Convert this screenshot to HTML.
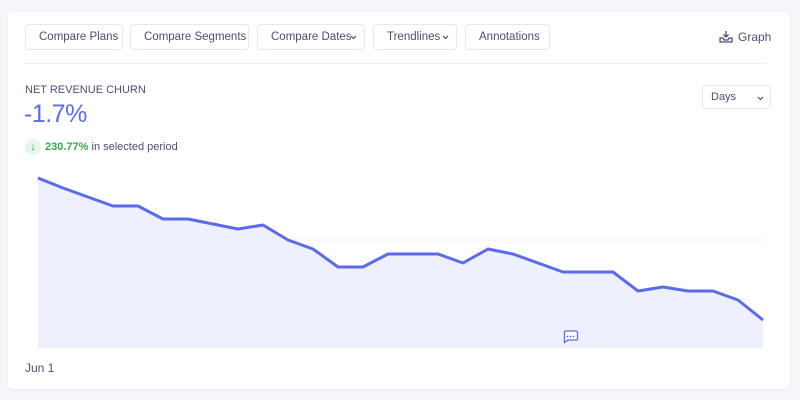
<!DOCTYPE html>
<html><head><style>
body{margin:0;width:800px;height:400px;background:#f5f5fa;font-family:"Liberation Sans",sans-serif;position:relative;overflow:hidden}
.card{position:absolute;left:8px;top:12px;width:782px;height:377px;background:#fff;border-radius:5px;box-shadow:0 1px 2px rgba(0,0,0,.05)}
.btn{position:absolute;top:24px;height:26px;border:1px solid #e6e8f0;border-radius:4px;font-size:11.5px;color:#4b4f73;line-height:24px;box-sizing:border-box;padding-left:13px;background:#fff;white-space:nowrap}
.chev{position:absolute;right:7px;top:10px}
</style></head><body>
<div class="card"></div>
<div class="btn" style="left:25px;width:98px">Compare Plans</div>
<div class="btn" style="left:130px;width:119px">Compare Segments</div>
<div class="btn" style="left:257px;width:108px">Compare Dates<svg class="chev" width="7" height="5"><path d="M1 1l2.5 2.5L6 1" fill="none" stroke="#555" stroke-width="1.2"/></svg></div>
<div class="btn" style="left:373px;width:84px">Trendlines<svg class="chev" width="7" height="5"><path d="M1 1l2.5 2.5L6 1" fill="none" stroke="#555" stroke-width="1.2"/></svg></div>
<div class="btn" style="left:465px;width:85px">Annotations</div>
<svg style="position:absolute;left:719px;top:30px" width="14" height="13" viewBox="0 0 14 13"><path d="M7 1v6M4.5 4.5L7 7l2.5-2.5M1 8v4h12V8H10l-1 2H5L4 8z" fill="none" stroke="#4b4f73" stroke-width="1.3"/></svg>
<div style="position:absolute;left:738px;top:30px;font-size:12px;color:#4b4f73">Graph</div>
<div style="position:absolute;left:24px;top:63px;width:742px;height:1px;background:#eceef4"></div>
<div style="position:absolute;left:25px;top:84px;font-size:11px;color:#4b4f73">NET REVENUE CHURN</div>
<div style="position:absolute;left:24px;top:100px;font-size:25px;color:#5b6bea;letter-spacing:-0.5px">-1.7%</div>
<div style="position:absolute;left:25px;top:139px;width:16px;height:16px;border-radius:50%;background:#e6f6ea;color:#2fae4e;font-size:11px;text-align:center;line-height:16px;font-weight:bold">↓</div>
<div style="position:absolute;left:45px;top:141px;font-size:11px;color:#4b4f73"><span style="color:#2fae4e;font-weight:bold">230.77%</span> in selected period</div>
<div style="position:absolute;left:702px;top:85px;width:69px;height:24px;border:1px solid #e6e8f0;border-radius:4px;box-sizing:border-box;font-size:11px;color:#4b4f73;line-height:22px;padding-left:8px">Days<svg style="position:absolute;right:6px;top:10px" width="7" height="5"><path d="M1 1l2.5 2.5L6 1" fill="none" stroke="#555" stroke-width="1.2"/></svg></div>
<svg style="position:absolute;left:0;top:0" width="800" height="400">
<line x1="38" y1="240" x2="763" y2="240" stroke="#eef0f6"/>
<line x1="38" y1="333" x2="763" y2="333" stroke="#e6e9f6"/>
<polygon fill="#eef1fd" points="38,178 63,188 88,197 113,206 138,206 163,219 188,219 213,224 238,229 263,225 288,240 313,249 338,267 363,267 388,254 413,254 438,254 463,263 488,249 513,254 538,263 563,272 588,272 613,272 638,291 663,287 688,291 713,291 738,300 763,320 763,348 38,348"/>
<polyline fill="none" stroke="#5b6bea" stroke-width="3" stroke-linejoin="round" points="38,178 63,188 88,197 113,206 138,206 163,219 188,219 213,224 238,229 263,225 288,240 313,249 338,267 363,267 388,254 413,254 438,254 463,263 488,249 513,254 538,263 563,272 588,272 613,272 638,291 663,287 688,291 713,291 738,300 763,320"/>
<path d="M565 331h11a1.5 1.5 0 0 1 1.5 1.5v6a1.5 1.5 0 0 1-1.5 1.5h-8l-3.5 2.5v-10a1.5 1.5 0 0 1 .5-1.5z" fill="#fff" stroke="#5b6bea" stroke-width="1.3"/>
<circle cx="567.5" cy="336.5" r=".9" fill="#5b6bea"/><circle cx="570.5" cy="336.5" r=".9" fill="#5b6bea"/><circle cx="573.5" cy="336.5" r=".9" fill="#5b6bea"/>
</svg>
<div style="position:absolute;left:25px;top:361px;font-size:12px;color:#4b4f73">Jun 1</div>
</body></html>
